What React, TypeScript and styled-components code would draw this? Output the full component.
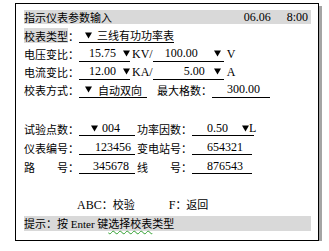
import React from "react";
import styled, { createGlobalStyle } from "styled-components";

const GlobalStyle = createGlobalStyle`
  html, body {
    margin: 0;
    padding: 0;
    background: #fff;
  }
  body {
    font-family: "Liberation Serif", "Noto Sans CJK SC", serif;
    font-size: 11px;
    color: #000;
  }
`;

const Page = styled.div`
  padding: 3px 0 0 15px;
`;

const Sheet = styled.div`
  box-sizing: border-box;
  width: 304px;
  height: 238px;
  border: 1px solid #000;
  box-shadow: 3px 3px 0 #a4a4a4;
  padding: 4px 7px 0 8px;
  background: #fff;
`;

const Line = styled.div<{ $h: number }>`
  display: flex;
  align-items: center;
  height: ${(p) => p.$h}px;
  white-space: pre;
`;

const Spacer = styled.div<{ $h: number }>`
  height: ${(p) => p.$h}px;
`;

const Band = styled.div<{ $h: number }>`
  flex: 1;
  display: flex;
  align-items: center;
  justify-content: space-between;
  height: ${(p) => p.$h}px;
  background: #d9d9d9;
`;

const Clock = styled.span`
  display: flex;
  gap: 16px;
  padding-right: 3px;
`;

const Highlight = styled.span`
  display: inline-flex;
  align-items: center;
  height: 15px;
  background: #d9d9d9;
`;

const Label = styled.span<{ $ml?: number }>`
  display: inline-flex;
  align-items: center;
  margin-left: ${(p) => p.$ml ?? 0}px;
`;

const Field = styled.span<{ $w: number; $pl: number }>`
  box-sizing: border-box;
  display: inline-flex;
  align-items: center;
  height: 15px;
  width: ${(p) => p.$w}px;
  padding-left: ${(p) => p.$pl}px;
  border-bottom: 1px solid #000;
`;

const Num = styled.span`
  font-size: 12px;
`;

const Unit = styled.span<{ $ml: number }>`
  margin-left: ${(p) => p.$ml}px;
  font-size: 12px;
`;

const TriBox = styled.svg<{ $ml?: number; $mr?: number; $auto?: boolean }>`
  flex: none;
  width: 7px;
  height: 7px;
  margin-left: ${(p) => (p.$auto ? "auto" : `${p.$ml ?? 0}px`)};
  margin-right: ${(p) => p.$mr ?? 0}px;
`;

const Gap = styled.span<{ $w: number }>`
  display: inline-block;
  width: ${(p) => p.$w}px;
`;

const Key = styled.span<{ $ml: number }>`
  margin-left: ${(p) => p.$ml}px;
`;

const Squiggle = styled.span`
  text-decoration: underline wavy #2e9e2e;
  text-decoration-thickness: 1px;
  text-underline-offset: 2px;
`;

function Tri(props: { ml?: number; mr?: number; auto?: boolean }) {
  return (
    <TriBox viewBox="0 0 7 7" $ml={props.ml} $mr={props.mr} $auto={props.auto}>
      <polygon points="0,0.5 7,0.5 3.5,6.5" fill="#000" />
    </TriBox>
  );
}

export default function App() {
  return (
    <>
      <GlobalStyle />
      <Page>
        <Sheet>
          <Line $h={18}>
            <Band $h={14}>
              <span>指示仪表参数输入</span>
              <Clock>
                <Num>06.06</Num>
                <Num>8:00</Num>
              </Clock>
            </Band>
          </Line>

          <Line $h={19}>
            <Label>
              <Highlight>校表类型</Highlight>：
            </Label>
            <Field $w={95} $pl={6}>
              <Tri />
              <Gap $w={6} />
              三线有功功率表
            </Field>
          </Line>

          <Line $h={18}>
            <Label>电压变比：</Label>
            <Field $w={51} $pl={10}>
              <Num>15.75</Num>
              <Tri auto />
            </Field>
            <Unit $ml={2}>KV/</Unit>
            <Field $w={71} $pl={12}>
              <Num>100.00</Num>
              <Tri auto mr={3} />
            </Field>
            <Unit $ml={3}>V</Unit>
          </Line>

          <Line $h={18}>
            <Label>电流变比：</Label>
            <Field $w={51} $pl={10}>
              <Num>12.00</Num>
              <Tri auto />
            </Field>
            <Unit $ml={2}>KA/</Unit>
            <Field $w={71} $pl={31}>
              <Num>5.00</Num>
              <Tri auto mr={3} />
            </Field>
            <Unit $ml={3}>A</Unit>
          </Line>

          <Line $h={18}>
            <Label>校表方式：</Label>
            <Field $w={68} $pl={6}>
              <Tri />
              <Gap $w={6} />
              自动双向
            </Field>
            <Label $ml={10}>最大格数：</Label>
            <Field $w={58} $pl={15}>
              <Num>300.00</Num>
            </Field>
          </Line>

          <Spacer $h={20} />

          <Line $h={19}>
            <Label>试验点数：</Label>
            <Field $w={56} $pl={12}>
              <Tri />
              <Gap $w={4} />
              <Num>004</Num>
            </Field>
            <Label $ml={2}>功率因数：</Label>
            <Field $w={62} $pl={15}>
              <Num>0.50</Num>
              <Tri ml={14} />
              <Num>L</Num>
            </Field>
          </Line>

          <Line $h={19}>
            <Label>仪表编号：</Label>
            <Field $w={56} $pl={16}>
              <Num>123456</Num>
            </Field>
            <Label $ml={2}>变电站号：</Label>
            <Field $w={60} $pl={15}>
              <Num>654321</Num>
            </Field>
          </Line>

          <Line $h={19}>
            <Label>路　　号：</Label>
            <Field $w={56} $pl={14}>
              <Num>345678</Num>
            </Field>
            <Label $ml={2}>线　　号：</Label>
            <Field $w={60} $pl={15}>
              <Num>876543</Num>
            </Field>
          </Line>

          <Spacer $h={19} />

          <Line $h={19}>
            <Key $ml={53}>
              <Num>ABC</Num>：校验
            </Key>
            <Key $ml={34}>
              <Num>F</Num>：返回
            </Key>
          </Line>

          <Line $h={18}>
            <Band $h={15}>
              <span>
                提示：按 Enter 键<Squiggle>选择校表</Squiggle>类型
              </span>
            </Band>
          </Line>
        </Sheet>
      </Page>
    </>
  );
}
